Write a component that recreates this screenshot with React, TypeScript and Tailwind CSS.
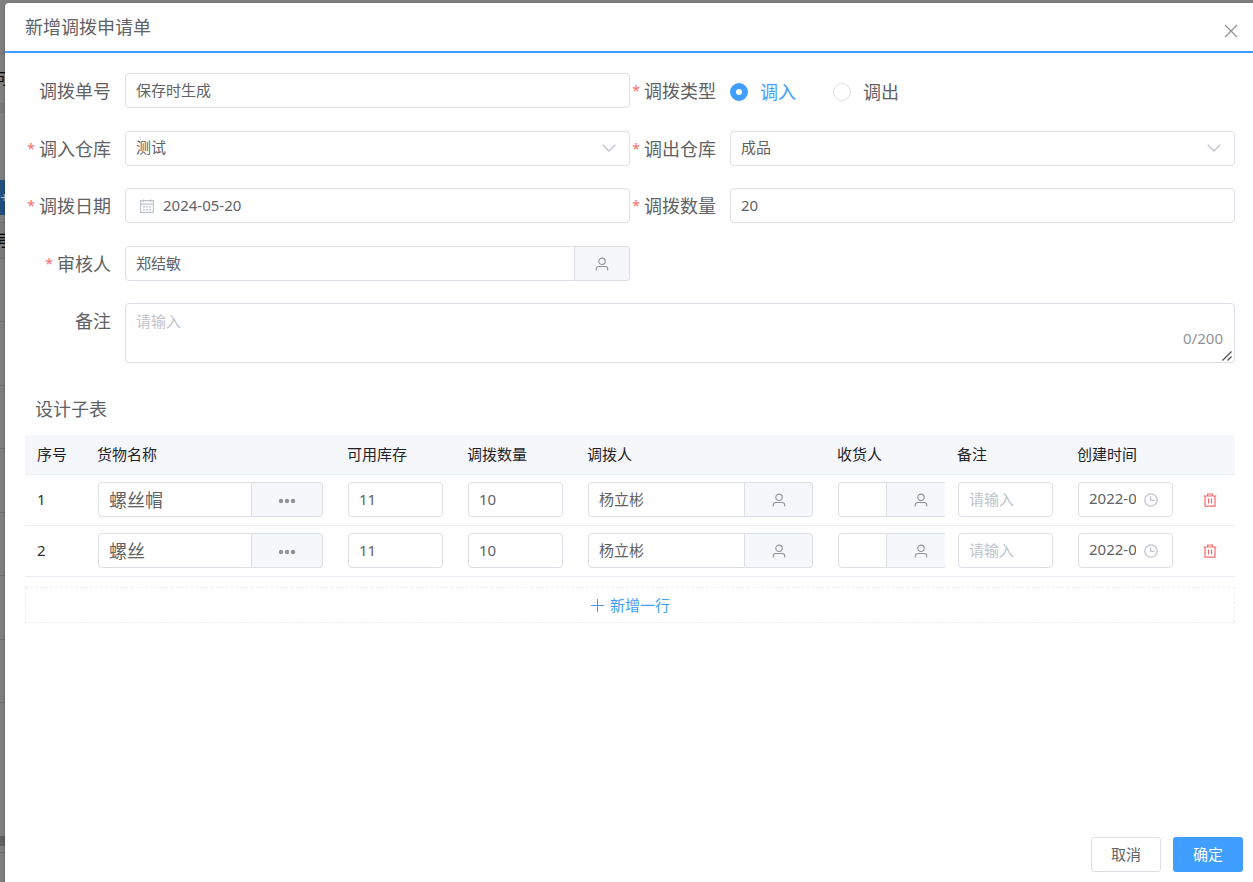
import { useState, type ReactNode } from "react";

const control =
  "h-[35px] w-full min-w-0 rounded border border-[#dcdfe6] bg-white px-2.5 pb-0.5 text-[15px] text-[#606266] outline-none placeholder:text-[#c0c4cc] placeholder:opacity-100 focus:border-[#409eff]";

function UserIcon() {
  return (
    <svg viewBox="0 0 14 14" className="size-3.5" fill="none" stroke="#909399" strokeWidth="1.1" aria-hidden="true">
      <circle cx="7" cy="4.3" r="3.2" />
      <path d="M1.3 13.4v-1.3c0-1.5 1.1-2.6 2.6-2.6h6.2c1.5 0 2.6 1.1 2.6 2.6v1.3" />
    </svg>
  );
}

function DotsIcon() {
  return (
    <svg viewBox="0 0 18 6" className="mt-0.5 h-1.5 w-[18px]" fill="#909399" aria-hidden="true">
      <circle cx="3" cy="3" r="2.2" />
      <circle cx="9" cy="3" r="2.2" />
      <circle cx="15" cy="3" r="2.2" />
    </svg>
  );
}

function CalendarIcon() {
  return (
    <svg viewBox="0 0 14 14" className="size-3.5" fill="none" stroke="#c0c4cc" strokeWidth="1.2" aria-hidden="true">
      <rect x="0.6" y="1.6" width="12.8" height="11.8" />
      <path d="M0.5 5.2h13M3.5 0.2v3M10.5 0.2v3" />
      <path d="M3 7.9h2M6 7.9h2M9 7.9h2M3 10.6h2M6 10.6h2M9 10.6h2" />
    </svg>
  );
}

function ClockIcon() {
  return (
    <svg viewBox="0 0 14 14" className="size-3.5" fill="none" stroke="#c0c4cc" strokeWidth="1.3" aria-hidden="true">
      <circle cx="7" cy="7" r="6.2" />
      <path d="M6.6 3.2v4.2h4" />
    </svg>
  );
}

function TrashIcon() {
  return (
    <svg viewBox="0 0 14 14" className="size-3.5" fill="none" stroke="#f56c6c" strokeWidth="1.2" aria-hidden="true">
      <path d="M0.5 3h13M4.6 3V1h4.8v2M2 3v10.2h10V3" />
      <path d="M5.5 5.6v5M8.5 5.6v5" />
    </svg>
  );
}

function Field({ label, htmlFor, required, children }: { label: string; htmlFor: string; required?: boolean; children: ReactNode }) {
  return (
    <div className="flex min-w-0">
      <label htmlFor={htmlFor} className="flex h-[35px] w-[100px] shrink-0 items-center justify-end pr-3.5 text-lg whitespace-nowrap">
        {required && <span className="mr-1 text-sm text-[#f56c6c]">*</span>}
        {label}
      </label>
      <div className="min-w-0 flex-1">{children}</div>
    </div>
  );
}

function SelectBox({ id, options }: { id: string; options: string[] }) {
  return (
    <div className="relative">
      <select id={id} className={`${control} appearance-none`}>
        {options.map((o) => (
          <option key={o}>{o}</option>
        ))}
      </select>
      <svg viewBox="0 0 14 8" className="pointer-events-none absolute top-[13px] right-3.5 h-2 w-3.5" fill="none" stroke="#c0c4cc" strokeWidth="1.3" aria-hidden="true">
        <path d="M0.7 0.7 7 7l6.3-6.3" />
      </svg>
    </div>
  );
}

function Picker({ id, label, value, inputClass, buttonClass, children }: { id?: string; label: string; value: string; inputClass: string; buttonClass: string; children: ReactNode }) {
  return (
    <div className="flex">
      <input
        id={id}
        aria-label={id ? undefined : label}
        defaultValue={value}
        className={`h-[35px] flex-1 rounded-l border border-[#dcdfe6] bg-white px-2.5 pb-0.5 text-[#606266] outline-none ${inputClass}`}
      />
      <button
        type="button"
        aria-label={`选择${label}`}
        className={`flex h-[35px] shrink-0 items-center justify-center rounded-r border border-l-0 border-[#dcdfe6] bg-[#f5f7fa] ${buttonClass}`}
      >
        {children}
      </button>
    </div>
  );
}

function PageBehind() {
  return (
    <div className="flex w-[5px] shrink-0 flex-col overflow-hidden text-[15px] text-black" aria-hidden="true">
      <div className="h-[51px] border-b border-[#6e7075]" />
      <div className="flex h-[49px] items-center justify-center">可</div>
      <div className="h-2.5 bg-[#77787a]" />
      <div className="h-[67px]" />
      <div className="flex h-[35px] items-center bg-[#204f80] text-white/60">+</div>
      <div className="h-[8px] border-b border-[#6e7075]" />
      <div className="flex h-9 items-center justify-center border-b border-[#6e7075] bg-[#7a7b7d] font-medium">号</div>
      {[0, 1, 2, 3, 4, 5, 6].map((n) => (
        <div key={n} className="h-16 border-b border-[#6e7075] even:h-[63px]" />
      ))}
      <div className="h-[133px]" />
      <div className="h-2.5 bg-[#606060]" />
      <div className="h-[7px] border-b border-[#6e7075]" />
    </div>
  );
}

const columns = [
  { title: "序号", width: "w-[60px]" },
  { title: "货物名称", width: "w-[250px]" },
  { title: "可用库存", width: "w-[120px]" },
  { title: "调拨数量", width: "w-[120px]" },
  { title: "调拨人", width: "w-[250px]" },
  { title: "收货人", width: "w-[120px]" },
  { title: "备注", width: "w-[120px]" },
  { title: "创建时间", width: "w-[120px]" },
  { title: "", width: "w-[50px]" },
];

const rows = [
  { goods: "螺丝帽", stock: "11", count: "10", sender: "杨立彬", created: "2022-05-20" },
  { goods: "螺丝", stock: "11", count: "10", sender: "杨立彬", created: "2022-05-20" },
];

export default function App() {
  const [direction, setDirection] = useState("调入");
  const [remark, setRemark] = useState("");
  const cell = "pt-0 pb-px pr-3 pl-[13px]";

  return (
    <div className="flex min-h-screen bg-[#7f7f7f] pt-[3px] font-['Noto_Sans','Noto_Sans_CJK_SC',sans-serif] text-[#606266]">
      <PageBehind />
      <div role="dialog" aria-labelledby="dialog-title" className="flex min-w-0 flex-1 flex-col rounded-tl-sm bg-white shadow-[0_1px_3px_rgba(0,0,0,0.3)]">
        <header className="flex h-[50px] items-center justify-between border-b-2 border-[#409eff] pr-3.5 pl-5">
          <h1 id="dialog-title" className="text-lg">新增调拨申请单</h1>
          <button type="button" aria-label="关闭" className="mt-2 p-px">
            <svg viewBox="0 0 14 14" className="size-3.5" fill="none" stroke="#909399" strokeWidth="1.3" aria-hidden="true">
              <path d="m1 1 12 12M13 1 1 13" />
            </svg>
          </button>
        </header>

        <form className="flex flex-1 flex-col" onSubmit={(e) => e.preventDefault()}>
          <div className="flex flex-col gap-[22px] pt-5 pr-[18px] pl-5">
            <div className="grid auto-rows-[35px] grid-cols-2 gap-y-[23px]">
              <Field label="调拨单号" htmlFor="code">
                <input id="code" className={control} defaultValue="保存时生成" />
              </Field>
              <Field label="调拨类型" htmlFor="type-in" required>
                <div className="flex h-[37px] items-center gap-[37px] text-lg">
                  {["调入", "调出"].map((d) => (
                    <label key={d} className={`flex items-center gap-3 ${direction === d ? "text-[#409eff]" : ""}`}>
                      <input
                        type="radio"
                        id={d === "调入" ? "type-in" : "type-out"}
                        name="direction"
                        checked={direction === d}
                        onChange={() => setDirection(d)}
                        className="size-[18px] appearance-none rounded-full border border-[#dcdfe6] bg-white checked:border-6 checked:border-[#409eff]"
                      />
                      {d}
                    </label>
                  ))}
                </div>
              </Field>
              <Field label="调入仓库" htmlFor="warehouse-in" required>
                <SelectBox id="warehouse-in" options={["测试", "成品"]} />
              </Field>
              <Field label="调出仓库" htmlFor="warehouse-out" required>
                <SelectBox id="warehouse-out" options={["成品", "测试"]} />
              </Field>
            </div>

            <div className="grid auto-rows-[35px] grid-cols-2 gap-y-[23px]">
              <Field label="调拨日期" htmlFor="date" required>
                <div className="relative">
                  <input id="date" className={`${control} pl-[37px]`} defaultValue="2024-05-20" />
                  <span className="pointer-events-none absolute inset-y-0 left-[15px] flex items-center">
                    <CalendarIcon />
                  </span>
                </div>
              </Field>
              <Field label="调拨数量" htmlFor="quantity" required>
                <input id="quantity" className={control} defaultValue="20" />
              </Field>
              <Field label="审核人" htmlFor="reviewer" required>
                <Picker id="reviewer" label="审核人" value="郑结敏" inputClass="min-w-0 text-[15px]" buttonClass="w-[55px]">
                  <UserIcon />
                </Picker>
              </Field>
            </div>

            <Field label="备注" htmlFor="remark">
              <div className="relative">
                <textarea
                  id="remark"
                  maxLength={200}
                  placeholder="请输入"
                  value={remark}
                  onChange={(e) => setRemark(e.target.value)}
                  className="block h-[60px] w-full resize-y rounded border border-[#dcdfe6] px-2.5 py-[5px] text-[15px] leading-6 outline-none placeholder:text-[#c0c4cc] [&::-webkit-resizer]:bg-transparent"
                />
                <span className="pointer-events-none absolute right-3 bottom-[13px] text-[15px] leading-6 text-[#909399]">{remark.length}/200</span>
                <svg viewBox="0 0 10 10" className="pointer-events-none absolute right-[3px] bottom-0.5 size-2.5" fill="none" stroke="#555" strokeWidth="1.4" aria-hidden="true">
                  <path d="M0.5 9.5l9-9M5.5 9.5l4-4" />
                </svg>
              </div>
            </Field>
          </div>

          <section className="pt-8 pr-[18px] pl-5">
            <h2 className="px-2.5 pb-3 text-lg">设计子表</h2>
            <table className="w-full table-fixed border-separate border-spacing-0 text-[15px]">
              <thead>
                <tr className="h-10 bg-[#f5f7fa] text-[#1f2329]">
                  {columns.map((c, i) => (
                    <th key={i} scope="col" className={`${c.width} border-b border-[#ebeef5] px-3 py-0 text-left font-normal`}>
                      {c.title || <span className="sr-only">操作</span>}
                    </th>
                  ))}
                </tr>
              </thead>
              <tbody className="[&_td]:border-b [&_td]:border-[#ebeef5]">
                {rows.map((r, i) => (
                  <tr key={i} className="h-[51px]">
                    <td className="px-3 pt-0 pb-0.5 text-[#303133]">{i + 1}</td>
                    <td className={cell}>
                      <Picker label="货物名称" value={r.goods} inputClass="min-w-0 text-lg" buttonClass="w-[71px]">
                        <DotsIcon />
                      </Picker>
                    </td>
                    <td className={cell}>
                      <input aria-label="可用库存" className={control} defaultValue={r.stock} />
                    </td>
                    <td className={cell}>
                      <input aria-label="调拨数量" className={control} defaultValue={r.count} />
                    </td>
                    <td className={cell}>
                      <Picker label="调拨人" value={r.sender} inputClass="min-w-0 text-[15px]" buttonClass="w-[68px]">
                        <UserIcon />
                      </Picker>
                    </td>
                    <td className="overflow-hidden pt-0 pb-px pl-[13px]">
                      <Picker label="收货人" value="" inputClass="w-[49px] max-w-[49px] min-w-[49px] text-[15px]" buttonClass="w-[68px]">
                        <UserIcon />
                      </Picker>
                    </td>
                    <td className={cell}>
                      <input aria-label="备注" className={control} placeholder="请输入" />
                    </td>
                    <td className={cell}>
                      <div className="flex h-[35px] items-center gap-2 rounded border border-[#dcdfe6] bg-white pr-3.5 pl-2.5">
                        <input aria-label="创建时间" className="min-w-0 flex-1 pb-0.5 text-[#606266] outline-none" defaultValue={r.created} />
                        <ClockIcon />
                      </div>
                    </td>
                    <td className="px-0 pt-0 pb-px">
                      <button type="button" aria-label="删除" className="mx-auto block p-1">
                        <TrashIcon />
                      </button>
                    </td>
                  </tr>
                ))}
              </tbody>
            </table>
            <button type="button" className="mt-2.5 flex h-9 w-full items-center justify-center gap-1.5 border border-dashed border-[#ebeef5] text-[15px] text-[#409eff]">
              <svg viewBox="0 0 14 14" className="size-3.5" fill="none" stroke="#409eff" aria-hidden="true">
                <path d="M7.5 1v13M1 7.5h13" />
              </svg>
              新增一行
            </button>
          </section>

          <footer className="mt-auto flex justify-end gap-3 p-2.5 text-[15px]">
            <button type="button" className="h-[35px] w-[70px] rounded-[3px] border border-[#dcdfe6] bg-white">取消</button>
            <button type="submit" className="h-[35px] w-[70px] rounded-[3px] bg-[#409eff] text-white">确定</button>
          </footer>
        </form>
      </div>
    </div>
  );
}
